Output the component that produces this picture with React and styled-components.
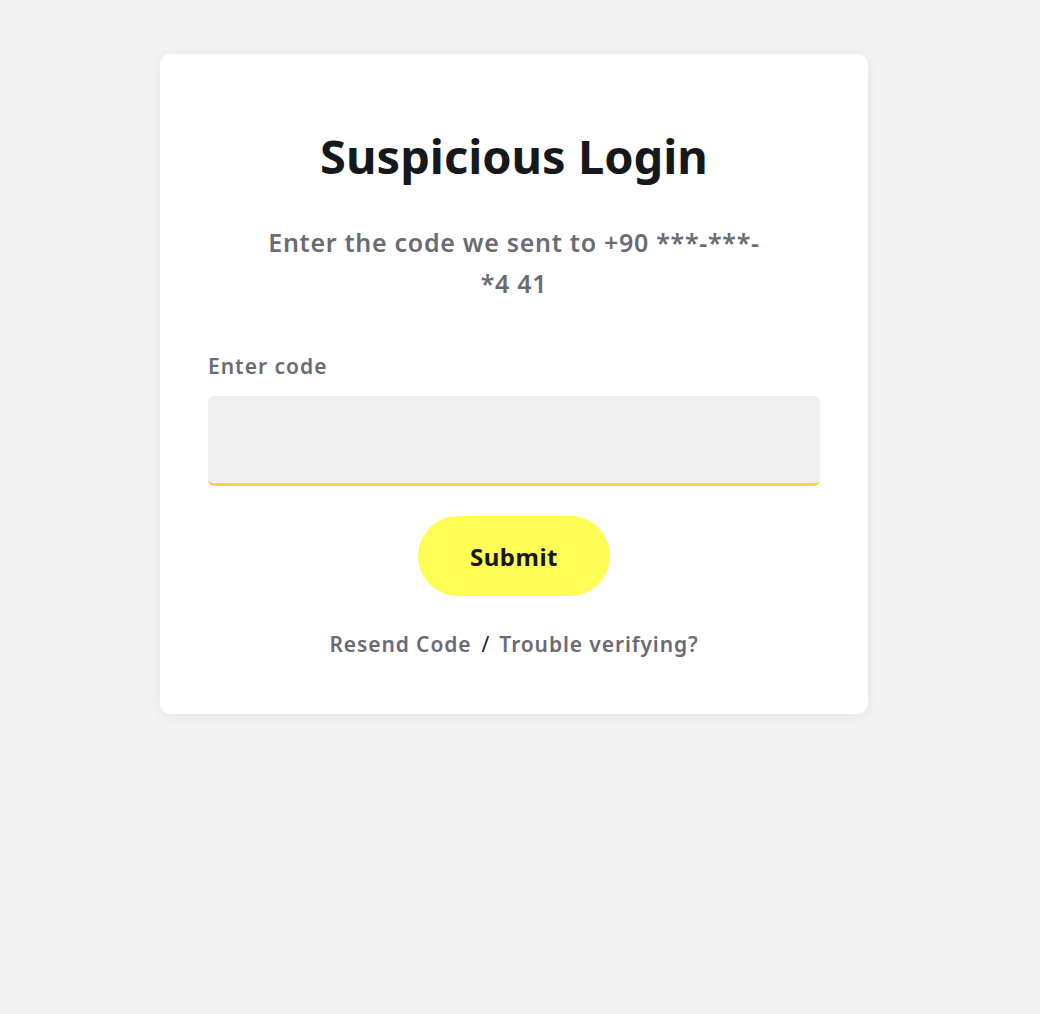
import React from 'react';
import styled, { createGlobalStyle } from 'styled-components';

const GlobalStyle = createGlobalStyle`
  html, body {
    margin: 0;
    padding: 0;
    background-color: #f2f2f2;
    font-family: "Noto Sans", Lato, "Liberation Sans", sans-serif;
  }
`

const Page = styled.div`
  display: flex;
  justify-content: center;
  align-items: flex-start;
  min-height: 1014px;
  padding-top: 54px;
  box-sizing: border-box;
  padding-right: 12px;
`

const Card = styled.div`
  width: 708px;
  box-sizing: border-box;
  background: #ffffff;
  border-radius: 10px;
  box-shadow: 0 2px 12px rgba(0, 0, 0, 0.06);
  padding: 74px 48px 56px;
  display: flex;
  flex-direction: column;
  align-items: center;
`

const Title = styled.h1`
  margin: 0;
  font-size: 47px;
  line-height: 56px;
  font-weight: 700;
  color: #16191c;
`

const Subtitle = styled.p`
  margin: 38px 0 0;
  max-width: 560px;
  text-align: center;
  font-size: 25px;
  line-height: 41px;
  font-weight: 600;
  letter-spacing: 0.7px;
  color: #6a6b73;
`

const Field = styled.div`
  align-self: stretch;
  display: flex;
  flex-direction: column;
  margin-top: 48px;
`

const Label = styled.label`
  font-size: 21px;
  line-height: 28px;
  font-weight: 600;
  letter-spacing: 1px;
  color: #6a6b73;
`

const Input = styled.input`
  margin-top: 16px;
  height: 90px;
  box-sizing: border-box;
  border: none;
  border-bottom: 3px solid #fbd446;
  border-radius: 6px;
  background: #f0f0f0;
  padding: 0 20px;
  font-size: 22px;
  font-family: inherit;
  outline: none;
`

const SubmitButton = styled.button`
  margin-top: 30px;
  width: 192px;
  height: 80px;
  border: none;
  border-radius: 40px;
  background: #fffc54;
  color: #16191c;
  font-family: inherit;
  font-size: 24px;
  font-weight: 700;
  letter-spacing: 0.5px;
  cursor: pointer;
`

const Links = styled.div`
  margin-top: 34px;
  display: flex;
  align-items: center;
  gap: 10px;
  font-size: 21px;
  line-height: 28px;
  font-weight: 600;
  letter-spacing: 0.9px;
  color: #6a6b73;
`

const LinkText = styled.a`
  color: inherit;
  text-decoration: none;
  cursor: pointer;
`

const Slash = styled.span`
  color: #16191c;
  font-weight: 400;
  letter-spacing: 0;
`

const App = () => {
  return (
    <>
      <GlobalStyle />
      <Page>
        <Card>
          <Title>Suspicious Login</Title>
          <Subtitle>
            Enter the code we sent to +90 ***-***-<br />*4 41
          </Subtitle>
          <Field>
            <Label htmlFor="code">Enter code</Label>
            <Input id="code" type="text" />
          </Field>
          <SubmitButton>Submit</SubmitButton>
          <Links>
            <LinkText>Resend Code</LinkText>
            <Slash>/</Slash>
            <LinkText>Trouble verifying?</LinkText>
          </Links>
        </Card>
      </Page>
    </>
  );
}

export default App;
